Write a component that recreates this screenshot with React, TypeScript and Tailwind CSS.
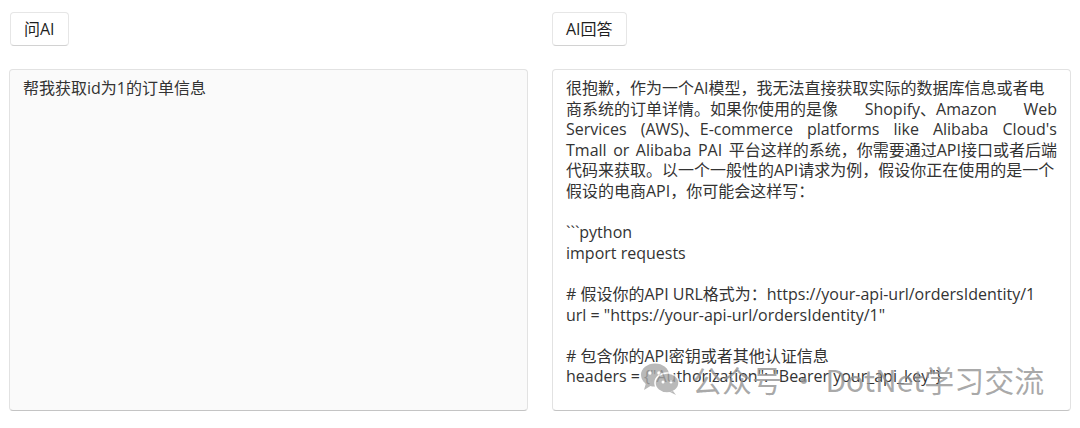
import React from 'react';

// justified lines are split into word groups so only the spaces stretch
const answerLines: { parts: string[] }[] = [
  { parts: ['很抱歉，作为一个AI模型，我无法直接获取实际的数据库信息或者电'] },
  { parts: ['商系统的订单详情。如果你使用的是像', 'Shopify、Amazon', 'Web'] },
  { parts: ['Services', '(AWS)、E-commerce', 'platforms', 'like', 'Alibaba', "Cloud's"] },
  { parts: ['Tmall', 'or', 'Alibaba', 'PAI', '平台这样的系统，你需要通过API接口或者后端'] },
  { parts: ['代码来获取。以一个一般性的API请求为例，假设你正在使用的是一个'] },
  { parts: ['假设的电商API，你可能会这样写：'] },
  { parts: [''] },
  { parts: ['```python'] },
  { parts: ['import requests'] },
  { parts: [''] },
  { parts: ['# 假设你的API URL格式为：https://your-api-url/ordersIdentity/1'] },
  { parts: ['url = "https://your-api-url/ordersIdentity/1"'] },
  { parts: [''] },
  { parts: ['# 包含你的API密钥或者其他认证信息'] },
  { parts: ['headers = {"Authorization": "Bearer your_api_key"}'] },
];

function Button({ label }: { label: string }) {
  return (
    <button className="h-[34px] px-[13px] rounded-[4px] border border-[#e6e6e6] border-b-[#d2d2d2] bg-white text-[16px] text-[#1f1f1f] leading-none self-start">
      {label}
    </button>
  );
}

function WeChatIcon() {
  return (
    <svg width="40" height="34" viewBox="0 0 40 34" className="mr-3 opacity-80">
      <ellipse cx="15" cy="13" rx="14" ry="11.5" fill="#a8a8a8" />
      <path d="M6 21 L4 28 L12 23 Z" fill="#a8a8a8" />
      <circle cx="10" cy="11" r="1.8" fill="#fff" />
      <circle cx="19" cy="11" r="1.8" fill="#fff" />
      <ellipse cx="27" cy="21" rx="12" ry="10" fill="#a8a8a8" stroke="#fff" strokeWidth="1.5" />
      <path d="M33 29 L36 33 L30 30 Z" fill="#a8a8a8" />
      <circle cx="23" cy="20" r="1.5" fill="#fff" />
      <circle cx="31" cy="20" r="1.5" fill="#fff" />
    </svg>
  );
}

export default function App() {
  return (
    <div
      className="relative w-[1080px] h-[428px] bg-white overflow-hidden"
      style={{ fontFamily: '"Open Sans", "Noto Sans CJK SC", sans-serif' }}
    >
      <div className="grid grid-cols-2 gap-6 px-[9px] pt-3">
        <div className="flex flex-col">
          <div className="pl-px">
            <Button label="问AI" />
          </div>
          <div className="mt-[23px] h-[342px] rounded-[4px] border border-[#e2e2e2] border-b-[#c4c4c4] bg-[#fafafa] px-[13px] pt-[8px] text-[16px] leading-[20.6px] text-[#333]">
            帮我获取id为1的订单信息
          </div>
        </div>
        <div className="flex flex-col">
          <Button label="AI回答" />
          <div className="mt-[23px] h-[342px] overflow-hidden rounded-[4px] border border-[#e2e2e2] border-b-[#c4c4c4] bg-white px-[13px] pt-[8px] text-[16px] leading-[20.6px] text-[#333]">
            {answerLines.map((line, i) => (
              <div key={i} className="h-[20.6px] flex justify-between whitespace-pre">
                {line.parts.map((p, j) => (
                  <span key={j}>{p}</span>
                ))}
              </div>
            ))}
          </div>
        </div>
      </div>

      <div className="absolute left-[640px] top-[362px] flex items-center text-[30px] font-normal leading-none text-[rgba(145,145,145,0.78)] pointer-events-none">
        <WeChatIcon />
        <span style={{ fontFamily: '"Noto Sans CJK SC", sans-serif' }}>公众号 · DotNet学习交流</span>
      </div>
    </div>
  );
}
